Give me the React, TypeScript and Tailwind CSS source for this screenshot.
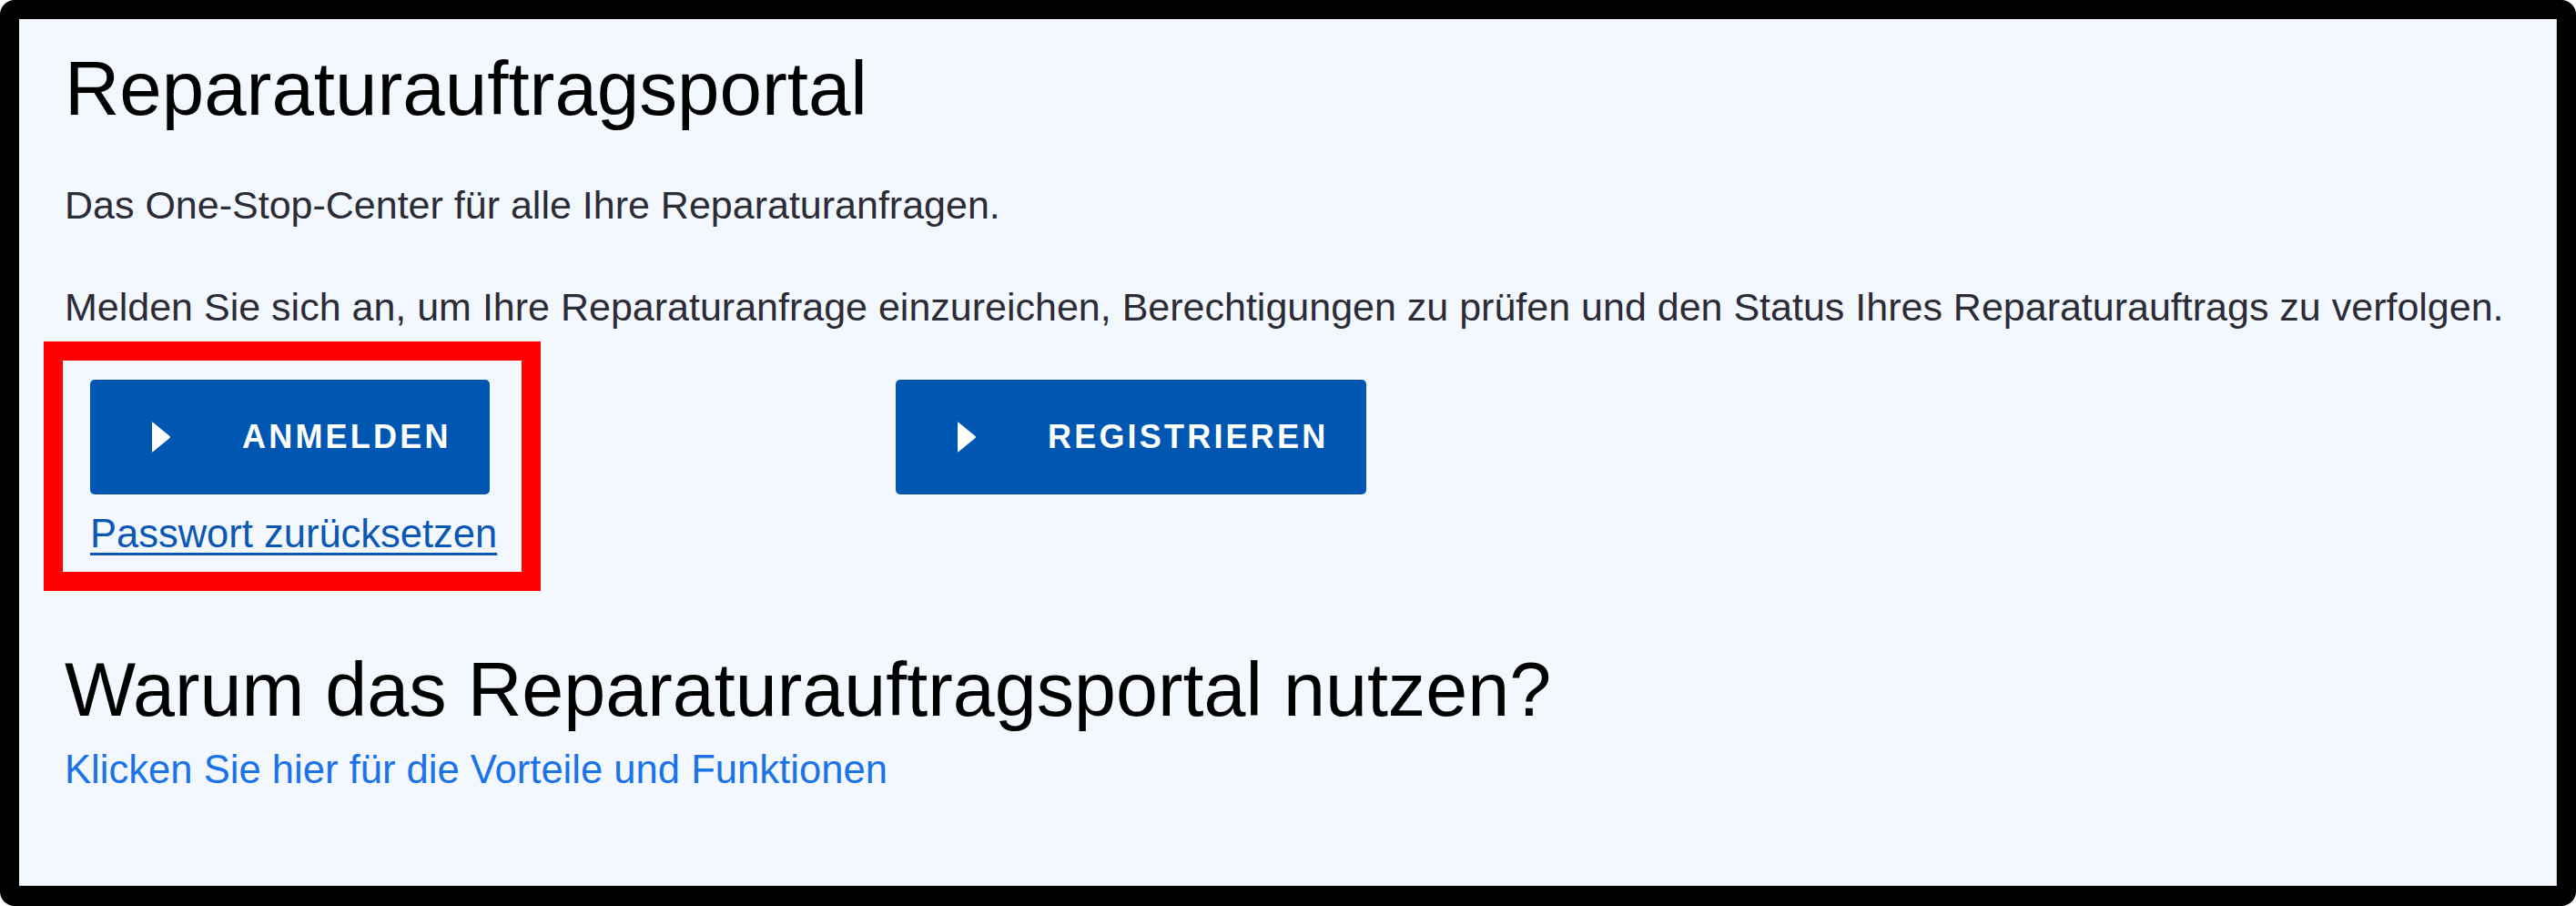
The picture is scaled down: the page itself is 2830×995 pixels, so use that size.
import React from "react";

function Tri() {
  return (
    <svg width="23" height="36" viewBox="0 0 23 36" className="shrink-0">
      <path d="M2 2.5 Q2 1 3.2 2 L21.5 17 Q22.5 18 21.5 19 L3.2 34 Q2 35 2 33.5 Z" fill="#ffffff" />
    </svg>
  );
}

function Btn({ label }: { label: string }) {
  return (
    <button className="flex items-center h-[126px] bg-[#0057b2] rounded-[5px] pl-[66px] pr-[42px] text-white">
      <Tri />
      <span className="ml-[78px] text-[36px] leading-[36px] font-bold tracking-[3.2px]">{label}</span>
    </button>
  );
}

export default function App() {
  return (
    <div className="w-[2830px] h-[995px] bg-white" style={{ fontFamily: '"Liberation Sans", Arial, sans-serif' }}>
      <div className="w-full h-full bg-black rounded-[16px] p-[21px] pb-[22px]">
        <div className="w-full h-full bg-[#f3f7fe] border-r border-b border-[#c4c8cf] pl-[50px] pt-[35px]">
          <h1 className="text-[83.5px] leading-[82px] text-black">Reparaturauftragsportal</h1>
          <p className="mt-[66px] text-[43px] leading-[42px] text-[#2b2c36]">
            Das One-Stop-Center für alle Ihre Reparaturanfragen.
          </p>
          <p className="mt-[70px] text-[43px] leading-[42px] text-[#2b2c36]">
            Melden Sie sich an, um Ihre Reparaturanfrage einzureichen, Berechtigungen zu prüfen und den Status Ihres Reparaturauftrags zu verfolgen.
          </p>
          <div className="flex mt-[59px] ml-[28px]">
            <div className="relative w-[885px] flex flex-col items-start">
              <div className="absolute left-[-51px] top-[-42px] w-[546px] h-[274px] border-[21px] border-[#ff0000]" />
              <Btn label="ANMELDEN" />
              <a className="mt-[22px] text-[43.5px] leading-[42px] text-[#0a57b4] underline decoration-[3px] underline-offset-[6px]">
                Passwort zurücksetzen
              </a>
            </div>
            <div>
              <Btn label="REGISTRIEREN" />
            </div>
          </div>
          <h2 className="mt-[110px] text-[82.7px] leading-[82px] text-black">Warum das Reparaturauftragsportal nutzen?</h2>
          <a className="block mt-[25px] text-[43.6px] leading-[42px] text-[#1a73e8]">
            Klicken Sie hier für die Vorteile und Funktionen
          </a>
        </div>
      </div>
    </div>
  );
}
